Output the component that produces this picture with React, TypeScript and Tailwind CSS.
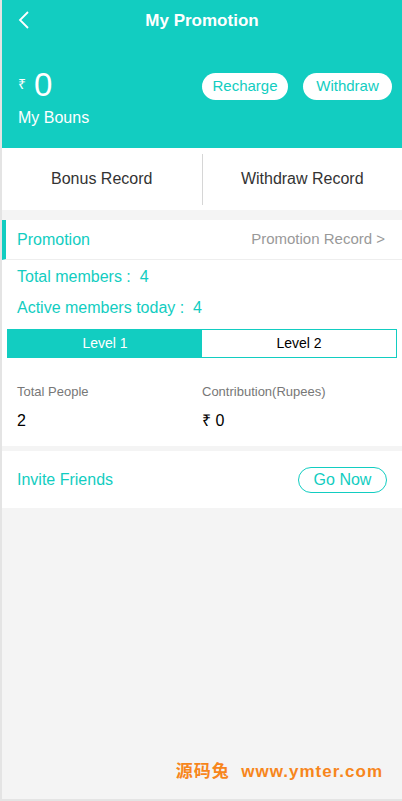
import React from "react";

export default function App() {
  return (
    <div
      className="h-[801px] bg-[#f4f4f4] border-l-2 border-b-2 border-[#e4e4e4] flex flex-col overflow-hidden"
      style={{ fontFamily: '"Liberation Sans", "Noto Sans CJK SC", sans-serif' }}
    >
      {/* header */}
      <section className="h-[148px] bg-[#12cdc1] text-white px-4">
        <div className="relative h-[42px] flex items-center justify-center">
          <svg className="absolute left-0 top-[11px]" width="14" height="18" viewBox="0 0 14 18">
            <polyline points="10,1 2,9 10,17" fill="none" stroke="white" strokeWidth="1.8" />
          </svg>
          <h1 className="text-[17px] font-bold">My Promotion</h1>
        </div>
        <div className="mt-[26px] flex justify-between">
          <div>
            <div className="h-[32px] flex items-center">
              <span className="text-[14px] mr-[8px]">₹</span>
              <span className="text-[33px] leading-none">0</span>
            </div>
            <p className="mt-[6px] text-[16px] leading-[24px]">My Bouns</p>
          </div>
          <div className="flex gap-[15px] pt-[5px] -mr-[6px]">
            <button className="h-[27px] w-[86px] rounded-full bg-white text-[#12cdc1] text-[15px]">
              Recharge
            </button>
            <button className="h-[27px] w-[89px] rounded-full bg-white text-[#12cdc1] text-[15px]">
              Withdraw
            </button>
          </div>
        </div>
      </section>

      {/* record tabs */}
      <section className="h-[62px] bg-white flex items-center text-[16px] text-[#333]">
        <div className="flex-1 text-center">Bonus Record</div>
        <div className="w-px h-[51px] bg-[#d6d6d6]"></div>
        <div className="flex-1 text-center">Withdraw Record</div>
      </section>

      {/* promotion */}
      <section className="mt-[10px] bg-white">
        <div className="h-[40px] flex items-center justify-between border-b border-[#eeeeee] border-l-4 border-l-[#12cdc1] pl-[11px] pr-[17px]">
          <span className="text-[16px] text-[#12cdc1]">Promotion</span>
          <span className="text-[15px] text-[#999]">Promotion Record &gt;</span>
        </div>
        <div className="px-[15px] pt-[2px] text-[16px] text-[#12cdc1]">
          <p className="h-[31px] leading-[30px]">Total members :&nbsp; 4</p>
          <p className="h-[30px] leading-[30px]">Active members today :&nbsp; 4</p>
        </div>
        <div className="mx-[5px] mt-[6px] h-[29px] flex border border-[#12cdc1] text-[14px]">
          <div className="flex-1 bg-[#12cdc1] text-white flex items-center justify-center">Level 1</div>
          <div className="flex-1 bg-white text-black flex items-center justify-center">Level 2</div>
        </div>
        <div className="grid grid-cols-2 px-[15px] pt-[24px] pb-[15px]">
          <div>
            <p className="text-[13px] text-[#777] leading-[20px]">Total People</p>
            <p className="mt-[9px] text-[16px] text-black leading-[20px]">2</p>
          </div>
          <div>
            <p className="text-[13px] text-[#777] leading-[20px]">Contribution(Rupees)</p>
            <p className="mt-[9px] text-[16px] text-black leading-[20px]">₹ 0</p>
          </div>
        </div>
      </section>

      {/* invite */}
      <section className="mt-[5px] h-[57px] bg-white flex items-center justify-between px-[15px]">
        <span className="text-[16px] text-[#12cdc1]">Invite Friends</span>
        <button className="h-[26px] w-[89px] rounded-full border border-[#12cdc1] text-[#12cdc1] text-[16px]">
          Go Now
        </button>
      </section>

      <div className="mt-auto mb-[15px] pr-[19px] flex justify-end">
        <span className="text-[17px] font-bold text-[#f7861c] tracking-[1px]">
          源码兔&nbsp; www.ymter.com
        </span>
      </div>
    </div>
  );
}
